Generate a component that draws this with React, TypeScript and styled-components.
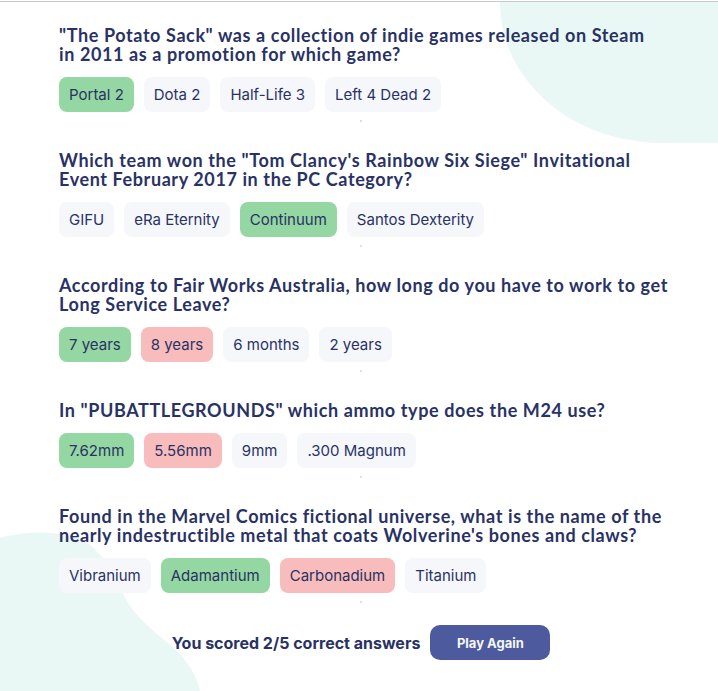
import React from "react";
import styled, { createGlobalStyle } from "styled-components";

const GlobalStyle = createGlobalStyle`
  html, body { margin: 0; padding: 0; background: #ffffff; }
  * { box-sizing: border-box; }
`;

const Page = styled.div`
  position: relative;
  min-height: 100vh;
  overflow: hidden;
  margin-top: 1px;
  border-top: 1px solid #c9c9c9;
  background: #ffffff;
`;

const BlobTop = styled.svg`
  position: absolute;
  top: 0;
  right: 0;
  width: 220px;
  height: 145px;
  z-index: 0;
`;

const BlobBottom = styled.svg`
  position: absolute;
  left: 0;
  bottom: 0;
  width: 220px;
  height: 165px;
  z-index: 0;
`;

const Content = styled.main`
  position: relative;
  z-index: 1;
  padding: 24px 49px 30px 59px;
  display: flex;
  flex-direction: column;
`;

const QuizList = styled.div`
  display: flex;
  flex-direction: column;
  gap: 29px;
`;

const QuestionBlock = styled.section`
  display: flex;
  flex-direction: column;
`;

const QuestionTitle = styled.h2`
  margin: 0;
  font-family: "Lato", "Open Sans", sans-serif;
  font-weight: 700;
  font-size: 18px;
  line-height: 19px;
  letter-spacing: 0.6px;
  color: #293264;
`;

const AnswerRow = styled.div`
  display: flex;
  flex-wrap: wrap;
  gap: 10px;
  margin-top: 13px;
`;

type AnswerState = "correct" | "wrong" | "neutral";

const answerBg: Record<AnswerState, string> = {
  correct: "#94d7a2",
  wrong: "#f8bcbc",
  neutral: "#f5f7fb",
};

const AnswerChip = styled.button<{ $state: AnswerState }>`
  border: none;
  margin: 0;
  padding: 8px 10px;
  border-radius: 8px;
  background: ${(p) => answerBg[p.$state]};
  font-family: "Inter", "Liberation Sans", sans-serif;
  font-weight: 400;
  font-size: 15px;
  line-height: 19px;
  color: #293264;
  cursor: pointer;
`;

const Divider = styled.div`
  align-self: center;
  width: 2px;
  height: 2px;
  margin-top: 8px;
  margin-right: 6px;
  background: #dbdef0;
`;

const Footer = styled.div`
  display: flex;
  justify-content: center;
  align-items: center;
  gap: 10px;
  margin-top: 22px;
  padding-right: 6px;
`;

const ScoreText = styled.p`
  margin: 0;
  font-family: "Inter", "Liberation Sans", sans-serif;
  font-weight: 700;
  font-size: 16px;
  color: #293264;
`;

const PlayButton = styled.button`
  border: none;
  height: 35px;
  width: 120px;
  border-radius: 10px;
  background: #4d5b9e;
  color: #f5f7fb;
  font-family: "Inter", "Liberation Sans", sans-serif;
  font-weight: 700;
  font-size: 13px;
  cursor: pointer;
`;

type Question = {
  text: string;
  answers: { label: string; state: AnswerState }[];
};

const questions: Question[] = [
  {
    text: '"The Potato Sack" was a collection of indie games released on Steam in\u00a02011 as a promotion for which game?',
    answers: [
      { label: "Portal 2", state: "correct" },
      { label: "Dota 2", state: "neutral" },
      { label: "Half-Life 3", state: "neutral" },
      { label: "Left 4 Dead 2", state: "neutral" },
    ],
  },
  {
    text: 'Which team won the "Tom Clancy\'s Rainbow Six Siege" Invitational Event February 2017 in the PC Category?',
    answers: [
      { label: "GIFU", state: "neutral" },
      { label: "eRa Eternity", state: "neutral" },
      { label: "Continuum", state: "correct" },
      { label: "Santos Dexterity", state: "neutral" },
    ],
  },
  {
    text: "According to Fair Works Australia, how long do you have to work to get Long Service Leave?",
    answers: [
      { label: "7 years", state: "correct" },
      { label: "8 years", state: "wrong" },
      { label: "6 months", state: "neutral" },
      { label: "2 years", state: "neutral" },
    ],
  },
  {
    text: 'In "PUBATTLEGROUNDS" which ammo type does the M24 use?',
    answers: [
      { label: "7.62mm", state: "correct" },
      { label: "5.56mm", state: "wrong" },
      { label: "9mm", state: "neutral" },
      { label: ".300 Magnum", state: "neutral" },
    ],
  },
  {
    text: "Found in the Marvel Comics fictional universe, what is the name of the nearly indestructible metal that coats Wolverine's bones and claws?",
    answers: [
      { label: "Vibranium", state: "neutral" },
      { label: "Adamantium", state: "correct" },
      { label: "Carbonadium", state: "wrong" },
      { label: "Titanium", state: "neutral" },
    ],
  },
];

export default function App() {
  return (
    <>
      <GlobalStyle />
      <Page>
        <BlobTop viewBox="0 0 220 145" aria-hidden="true">
          <path
            d="M2 0 C 2 45, 25 85, 65 112 C 95 132, 130 140, 160 141 L 220 141 L 220 0 Z"
            fill="#eaf8f5"
          />
        </BlobTop>
        <BlobBottom viewBox="0 0 220 165" aria-hidden="true">
          <path
            d="M0 11 C 20 5, 55 3, 80 12 C 100 20, 112 45, 125 70 C 135 92, 160 108, 178 125 C 192 140, 199 155, 200 165 L 0 165 Z"
            fill="#eaf8f5"
          />
        </BlobBottom>
        <Content>
          <QuizList>
            {questions.map((q, i) => (
              <QuestionBlock key={i}>
                <QuestionTitle>{q.text}</QuestionTitle>
                <AnswerRow>
                  {q.answers.map((a) => (
                    <AnswerChip key={a.label} $state={a.state}>
                      {a.label}
                    </AnswerChip>
                  ))}
                </AnswerRow>
                <Divider />
              </QuestionBlock>
            ))}
          </QuizList>
          <Footer>
            <ScoreText>You scored 2/5 correct answers</ScoreText>
            <PlayButton>Play Again</PlayButton>
          </Footer>
        </Content>
      </Page>
    </>
  );
}
